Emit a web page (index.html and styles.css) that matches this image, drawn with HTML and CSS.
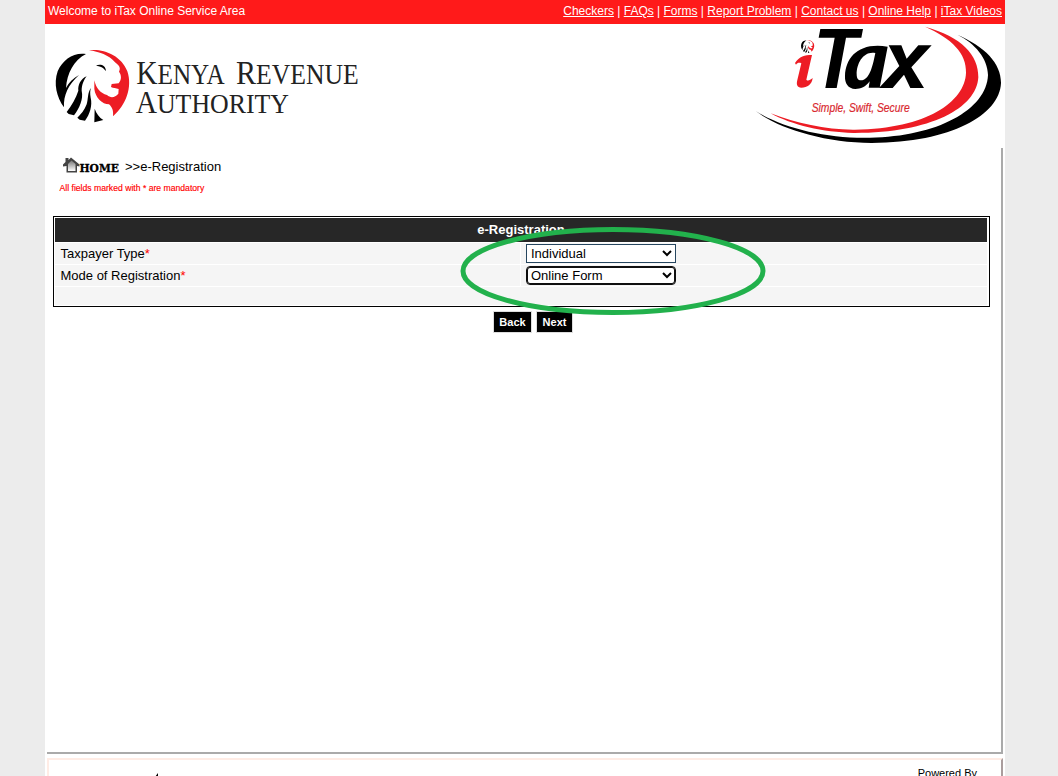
FILE: index.html
```html
<!DOCTYPE html>
<html lang="en">
<head>
<meta charset="utf-8">
<title>iTax e-Registration</title>
<link rel="stylesheet" href="styles.css">
</head>
<body>
<div class="page">
  <div class="topbar">
    <span class="welcome">Welcome to iTax Online Service Area</span>
    <nav class="links"><a href="#">Checkers</a> | <a href="#">FAQs</a> | <a href="#">Forms</a> | <a href="#">Report Problem</a> | <a href="#">Contact us</a> | <a href="#">Online Help</a> | <a href="#">iTax Videos</a></nav>
  </div>
  <header class="brand">
    <svg class="kra" viewBox="-15 -63 990 372" role="img" aria-label="Kenya Revenue Authority">
      <g id="lion">
        <path d="M108 27C72 21 38 43 23 79C10 116 20 158 42 187C40 151 55 119 87 90C69 100 56 113 48 129C51 84 72 45 108 27Z"/>
        <path d="M110 94C92 101 83 121 85 137C78 159 65 181 50 201L56 207L72 211C88 190 101 162 95 137C95 119 102 104 110 94Z"/>
        <path d="M123 129C112 143 115 162 110 178C104 195 92 209 82 218L89 224L105 227C119 209 128 181 122 158C120 145 120 137 123 129Z"/>
        <path d="M134 191L133 232L160 225C148 217 139 206 134 191Z"/>
        <path d="M138 62C150 56 167 60 168 78L164 74C158 66 150 64 138 62Z"/>
        <path class="red" d="M117 16C157 10 213 29 232 79C248 126 228 181 189 214C191 196 186 186 177 178C157 178 136 158 133 132V106C138 130 152 145 171 150C182 160 195 158 205 146L206 132C198 129 190 130 183 126L185 117L206 115C216 102 214 90 207 80C214 67 205 60 195 52C178 31 146 20 117 16Z"/>
      </g>
      <g class="kra-name">
        <text x="259" y="117" font-size="102" textLength="265" lengthAdjust="spacingAndGlyphs">K<tspan font-size="87">ENYA</tspan></text>
        <text x="558" y="117" font-size="102" textLength="368" lengthAdjust="spacingAndGlyphs">R<tspan font-size="87">EVENUE</tspan></text>
        <text x="257" y="203" font-size="97" textLength="460" lengthAdjust="spacingAndGlyphs">A<tspan font-size="85">UTHORITY</tspan></text>
      </g>
    </svg>
    <svg class="itax" viewBox="0 12 795 372" role="img" aria-label="iTax">
      <path class="red" d="M555 20C665 50 716 105 715 172C710 265 570 340 340 339C250 337 155 315 92 280C170 310 260 330 345 329C560 326 675 245 678 158C680 100 635 55 555 20Z"/>
      <path d="M652 44C735 80 784 130 783 190C778 285 635 368 395 369C250 367 115 325 47 273C130 325 260 356 390 353C590 350 740 270 744 165C743 115 705 70 652 44Z"/>
      <g class="tax-letters">
        <path d="M241 27H369L364 53H318L290 204H256L284 53H236Z"/>
        <path fill-rule="evenodd" d="M443 80L419 203H386L389 184C377 201 362 207 346 207C324 206 314 190 315 168C317 111 357 66 443 80ZM406 99C371 92 350 129 350 162C350 175 354 181 363 181C387 180 397 145 406 99Z"/>
        <path d="M446 76H484L500 116L535 76H575L514 142L552 204H511L492 164L458 204H417L478 138Z"/>
      </g>
      <path class="red" d="M165 129C178 109 194 105 216 105L199 179C204 185 210 180 218 174C216 193 202 203 184 203C172 203 168 194 172 180L184 130C177 127 172 129 168 134Z"/>
      <use href="#lion" transform="translate(180 57) scale(.18)"/>
      <text class="tagline" x="215" y="276" textLength="294" lengthAdjust="spacingAndGlyphs">Simple, Swift, Secure</text>
    </svg>
  </header>
  <main class="content">
    <div class="crumb">
      <svg class="home" viewBox="0 0 58 18" role="img" aria-label="Home">
        <defs><linearGradient id="wall" x2="0" y2="1"><stop stop-color="#777"/><stop offset="1" stop-color="#fff"/></linearGradient></defs>
        <path class="roof" d="M2.500 1H5.500V3L8 .5L16.500 7.500V9.500L14 9V15.500H3.500V9L0 9.500V7.500L2.500 5Z"/>
        <path fill="url(#wall)" d="M5 7L8.500 3.500L12.500 7V14H5Z"/>
        <text x="16.500" y="15" textLength="39.500" lengthAdjust="spacingAndGlyphs">HOME</text>
      </svg>
      <span>&gt;&gt;e-Registration</span>
    </div>
    <p class="mandatory">All fields marked with * are mandatory</p>
    <form class="panel">
      <h1>e-Registration</h1>
      <div class="row"><label for="type">Taxpayer Type<b>*</b></label><div class="field"><select id="type"><option>Individual</option></select></div></div>
      <div class="row"><label for="mode">Mode of Registration<b>*</b></label><div class="field"><select id="mode" class="active"><option>Online Form</option></select></div></div>
      <div class="row empty"></div>
      <svg class="mark" viewBox="0 0 306 90" aria-hidden="true"><ellipse cx="153" cy="45" rx="150" ry="41.500"/></svg>
    </form>
    <div class="actions"><button>Back</button><button>Next</button></div>
  </main>
  <footer class="footer">
    <svg class="fleck" viewBox="0 0 4 4" aria-hidden="true"><path d="M0 4L3 0V4Z"/></svg>
    <span>Powered By</span>
  </footer>
</div>
</body>
</html>
```
FILE: styles.css
```css
* { box-sizing: border-box; }
body { margin: 0; height: 776px; overflow: hidden; background: #ececec; color: #000; font: 13px "Liberation Sans", Arial, sans-serif; }
.page { width: 960px; height: 776px; margin-left: 45px; background: #fff; overflow: hidden; display: flex; flex-direction: column; }
.topbar { height: 24px; flex: none; background: #ff1a1a; color: #fff; display: flex; justify-content: space-between; padding: 0 3px; font-size: 12px; line-height: 22px; }
.topbar a { color: #fff; }
.brand { height: 124px; flex: none; display: flex; justify-content: space-between; }
.kra { width: 330px; height: 124px; }
.itax { width: 265px; height: 124px; }
.red { fill: #ed1c24; }
.kra-name { font-family: "Liberation Serif", serif; fill: #222; }
.tagline { font: italic 38px "Liberation Sans", Arial, sans-serif; fill: #d9272e; stroke: #d9272e; stroke-width: .6; }
.content { height: 606px; flex: none; width: 956px; margin-left: 2px; border-right: 2px solid #aaa; border-bottom: 2px solid #aaa; padding: 8px 0 0 6px; }
.crumb { display: flex; height: 20px; padding-left: 10px; gap: 4px; line-height: 21px; }
.home { width: 58px; height: 18px; margin-top: 1px; }
.home text { font: bold 11px "DejaVu Serif", serif; stroke: #000; stroke-width: .3; }
.roof { fill: #444; }
.mandatory { margin: 6px 0 0 6.500px; height: 12px; color: #f00; font-size: 8.650px; line-height: 12px; -webkit-text-stroke: .15px #f00; }
.panel { position: relative; width: 937px; height: 91px; margin-top: 22px; border: 1px solid #000; padding: 1px 2px 1px 1px; display: flex; flex-direction: column; gap: 1px; }
.panel h1 { margin: 0; height: 24px; background: #272727; color: #fff; font-size: 13px; line-height: 24px; text-align: center; }
.row { display: grid; grid-template-columns: 465px 1fr; gap: 1px; height: 21px; line-height: 21px; }
.row label, .field, .empty { background: #f5f5f5; }
.row label { padding-left: 5.500px; }
.row b { color: #f00; font-weight: normal; }
.empty { height: 18px; }
.field { padding: 1px 5px; display: flex; }
select { width: 150px; height: 19px; padding: 0; border: 1px solid #26465f; border-radius: 0; background-color: #fff; color: #000; font: 13px "Liberation Sans", Arial, sans-serif; }
select.active { border-color: #101010; border-radius: 4px; box-shadow: inset 0 0 0 1px #101010; }
.mark { position: absolute; left: 406px; top: 9px; width: 306px; height: 90px; fill: none; stroke: #22b14c; stroke-width: 5; }
.actions { display: flex; gap: 4px; padding: 4px 0 0 440px; }
.actions button { height: 22px; width: 39px; padding: 0; border: 1px solid #ddd; background: #000; color: #fff; font: bold 11px "Liberation Sans", Arial, sans-serif; }
.actions button + button { width: 37px; }
.footer { margin: 4px 0 0 2px; width: 956px; height: 80px; flex: none; border: 2px solid #ffece5; border-right-color: #aa9d9d; padding: 7px 24px 0 106px; display: flex; justify-content: space-between; font-size: 11px; line-height: 12px; }
.fleck { width: 4px; height: 4px; margin-top: 6px; }
```
